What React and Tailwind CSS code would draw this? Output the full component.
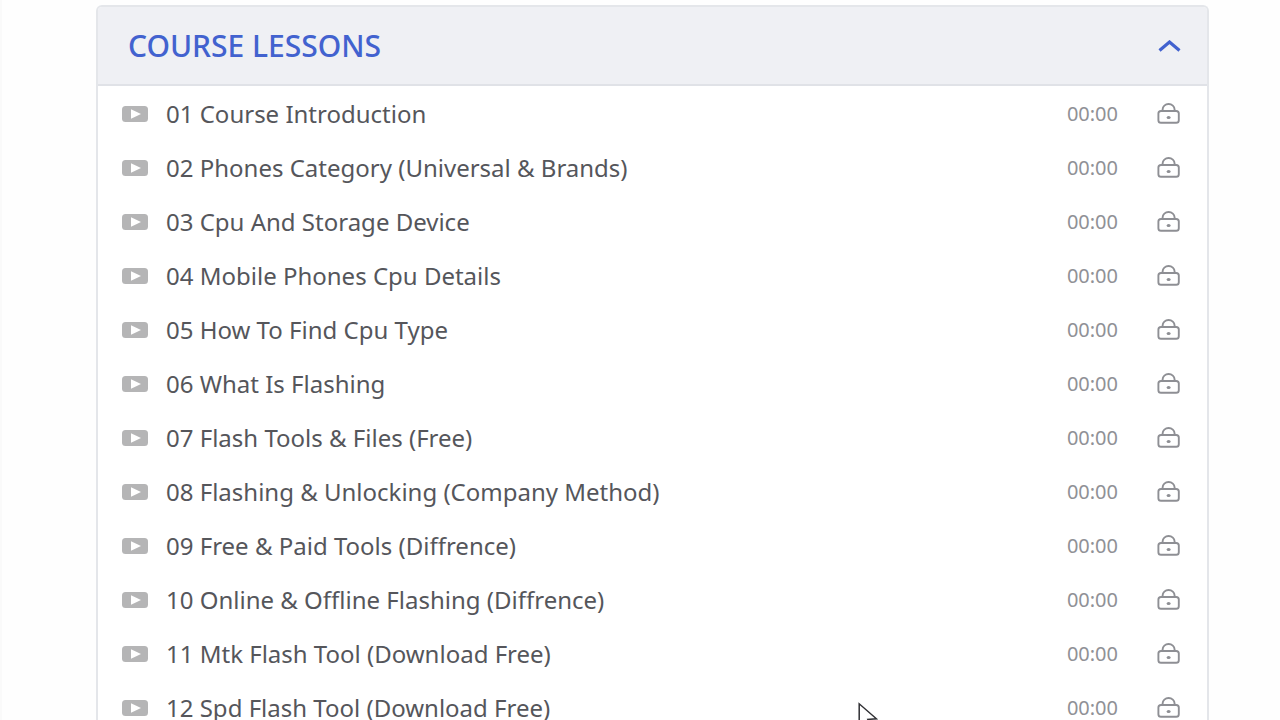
import { useState } from "react";

const lessons = [
  "01 Course Introduction",
  "02 Phones Category (Universal & Brands)",
  "03 Cpu And Storage Device",
  "04 Mobile Phones Cpu Details",
  "05 How To Find Cpu Type",
  "06 What Is Flashing",
  "07 Flash Tools & Files (Free)",
  "08 Flashing & Unlocking (Company Method)",
  "09 Free & Paid Tools (Diffrence)",
  "10 Online & Offline Flashing (Diffrence)",
  "11 Mtk Flash Tool (Download Free)",
  "12 Spd Flash Tool (Download Free)",
];

function PlayIcon() {
  return (
    <svg className="h-4 w-[26px] shrink-0" viewBox="0 0 26 16" aria-hidden="true">
      <rect width="26" height="16" rx="3.5" fill="#b5b5b6" />
      <path d="M9 3.2 19 8l-10 4.8z" fill="#fff" />
    </svg>
  );
}

function LockIcon() {
  return (
    <svg className="h-[22px] w-6 shrink-0" viewBox="0 0 24 22" fill="none" stroke="#8e8f94" strokeWidth="1.9" aria-hidden="true">
      <rect x="2.4" y="8" width="20.4" height="11.8" rx="2.6" />
      <path d="M6.6 8V6.4a6 5.4 0 0 1 12 0V8" />
      <ellipse cx="12.6" cy="14.6" rx="2" ry="1.5" fill="#8e8f94" stroke="none" />
    </svg>
  );
}

function ChevronIcon({ open }) {
  return (
    <svg className={open ? "h-3 w-6" : "h-3 w-6 rotate-180"} viewBox="0 0 24 12" fill="none" stroke="#4262cf" strokeWidth="3.2" aria-hidden="true">
      <path d="M2.5 10.5 12.5 2l10 8.5" />
    </svg>
  );
}

function Lesson({ title }) {
  return (
    <li className="flex h-[54px] items-center pr-[27px] pl-6">
      <PlayIcon />
      <span className="ml-[18px] flex-1 text-[24px] leading-7 text-[#55565b]">{title}</span>
      <span className="mr-[38px] text-[20px] leading-7 text-[#909196]">00:00</span>
      <LockIcon />
    </li>
  );
}

export default function App() {
  const [open, setOpen] = useState(true);
  return (
    <main className="relative h-screen overflow-hidden border-l-2 border-[#fafafa] bg-[#fefefe] pt-[5px] pr-[71px] pl-[94px] font-['Noto_Sans','Open_Sans',sans-serif]">
      <section className="overflow-hidden rounded-t-md border-2 border-b-0 border-[#e4e6ea] bg-white">
        <h2>
          <button
            type="button"
            aria-expanded={open}
            aria-controls="course-lessons"
            onClick={() => setOpen(!open)}
            className="flex h-[79px] w-full items-center justify-between border-b-2 border-[#e0e2e7] bg-[#eff0f4] pr-[26px] pl-[30px] text-[30px] leading-8 font-medium text-[#4262cf]"
          >
            COURSE LESSONS
            <ChevronIcon open={open} />
          </button>
        </h2>
        {open && (
          <ul id="course-lessons" className="pt-px">
            {lessons.map((title) => (
              <Lesson key={title} title={title} />
            ))}
          </ul>
        )}
      </section>
      <svg className="absolute top-[702px] left-[856px] h-7 w-5" viewBox="0 0 20 28" aria-hidden="true">
        <path d="M1.2 1.8v23l5.3-5 3.3 6.5 3-1.3-3-7.6 8.6-.6z" fill="#fff" stroke="#303034" strokeWidth="1.5" />
      </svg>
    </main>
  );
}
